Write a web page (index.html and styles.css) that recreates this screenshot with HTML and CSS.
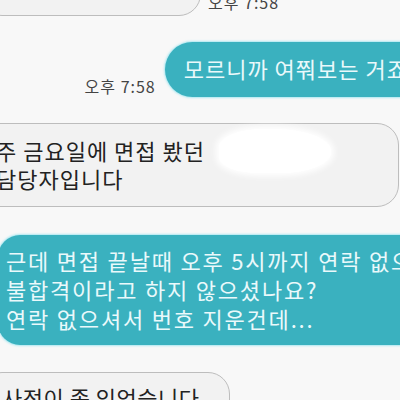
FILE: index.html
```html
<!DOCTYPE html>
<html>
<head>
    <meta charset="UTF-8">
    <title>대화</title>
    <link rel="stylesheet" href="styles.css">
</head>
<body>
    <div class="chat">
        <div class="row row-top">
            <div class="bubble in bubble-top"></div>
            <span class="time time-top">오후 7:58</span>
        </div>

        <div class="row out">
            <span class="time">오후 7:58</span>
            <div class="bubble sent sent-one">모르니까 여쭤보는 거죠</div>
        </div>

        <div class="row row-gap">
            <div class="bubble in in-wide">
                주 금요일에 면접 봤던<br>담당자입니다
                <span class="redact"></span>
            </div>
        </div>

        <div class="row row-gap2">
            <div class="bubble sent sent-long">근데 면접 끝날때 오후 5시까지 연락 없으면<br>불합격이라고 하지 않으셨나요?<br>연락 없으셔서 번호 지운건데...</div>
        </div>

        <div class="row row-gap3">
            <div class="bubble in in-last">사정이 좀 있었습니다<br>죄송합니다</div>
        </div>
    </div>
</body>
</html>
```

FILE: styles.css
```css
html, body { margin: 0; padding: 0; background: #f8f8f8; overflow: hidden; }
.chat { display: flex; flex-direction: column; width: 400px; height: 400px; overflow: hidden; font-family: "Noto Sans CJK KR", "Noto Sans", sans-serif; }
.row { display: flex; align-items: flex-end; }
.out { justify-content: flex-end; margin-top: 26px; }
.row-gap { margin-top: 26px; }
.row-gap2 { margin-top: 28px; }
.row-gap3 { margin-top: 27px; }

.bubble { font-size: 22px; line-height: 29px; letter-spacing: 1px; white-space: nowrap; box-sizing: border-box; }
.in { position: relative; background: #f2f2f2; border: 1px solid #bdbdbd; border-radius: 22px; color: #222; }
.sent { background: #3ab1bf; color: #eaf9fb; border-radius: 28px; box-shadow: 0 0 2px 1px rgba(140, 225, 238, 0.7); }

.row-top { margin-top: -44px; }
.bubble-top { width: 221px; height: 60px; margin-left: -20px; }
.time { font-size: 16px; line-height: 20px; letter-spacing: 1px; color: #444; white-space: nowrap; }
.time-top { margin-left: 7px; margin-bottom: 4px; }
.out .time { margin-right: 9px; margin-bottom: 1px; }

.sent-one { padding: 12px 20px 14px 19px; margin-right: -28px; }

.in-wide { flex: 1; margin-left: -22px; margin-right: 1px; padding: 12px 16px 14px 17px; line-height: 28px; }
.redact { position: absolute; left: 240px; top: 5px; width: 112px; height: 44px; background: #fff; border-radius: 40% 50% 45% 35%; box-shadow: 0 0 6px 3px #fff; }

.sent-long { flex: 1; margin-left: -2px; margin-right: -60px; padding: 11px 20px 12px 8px; border-radius: 22px; letter-spacing: 1.8px; }

.in-last { margin-left: -20px; padding: 10px 29px 14px 21px; letter-spacing: 0.5px; }
```
